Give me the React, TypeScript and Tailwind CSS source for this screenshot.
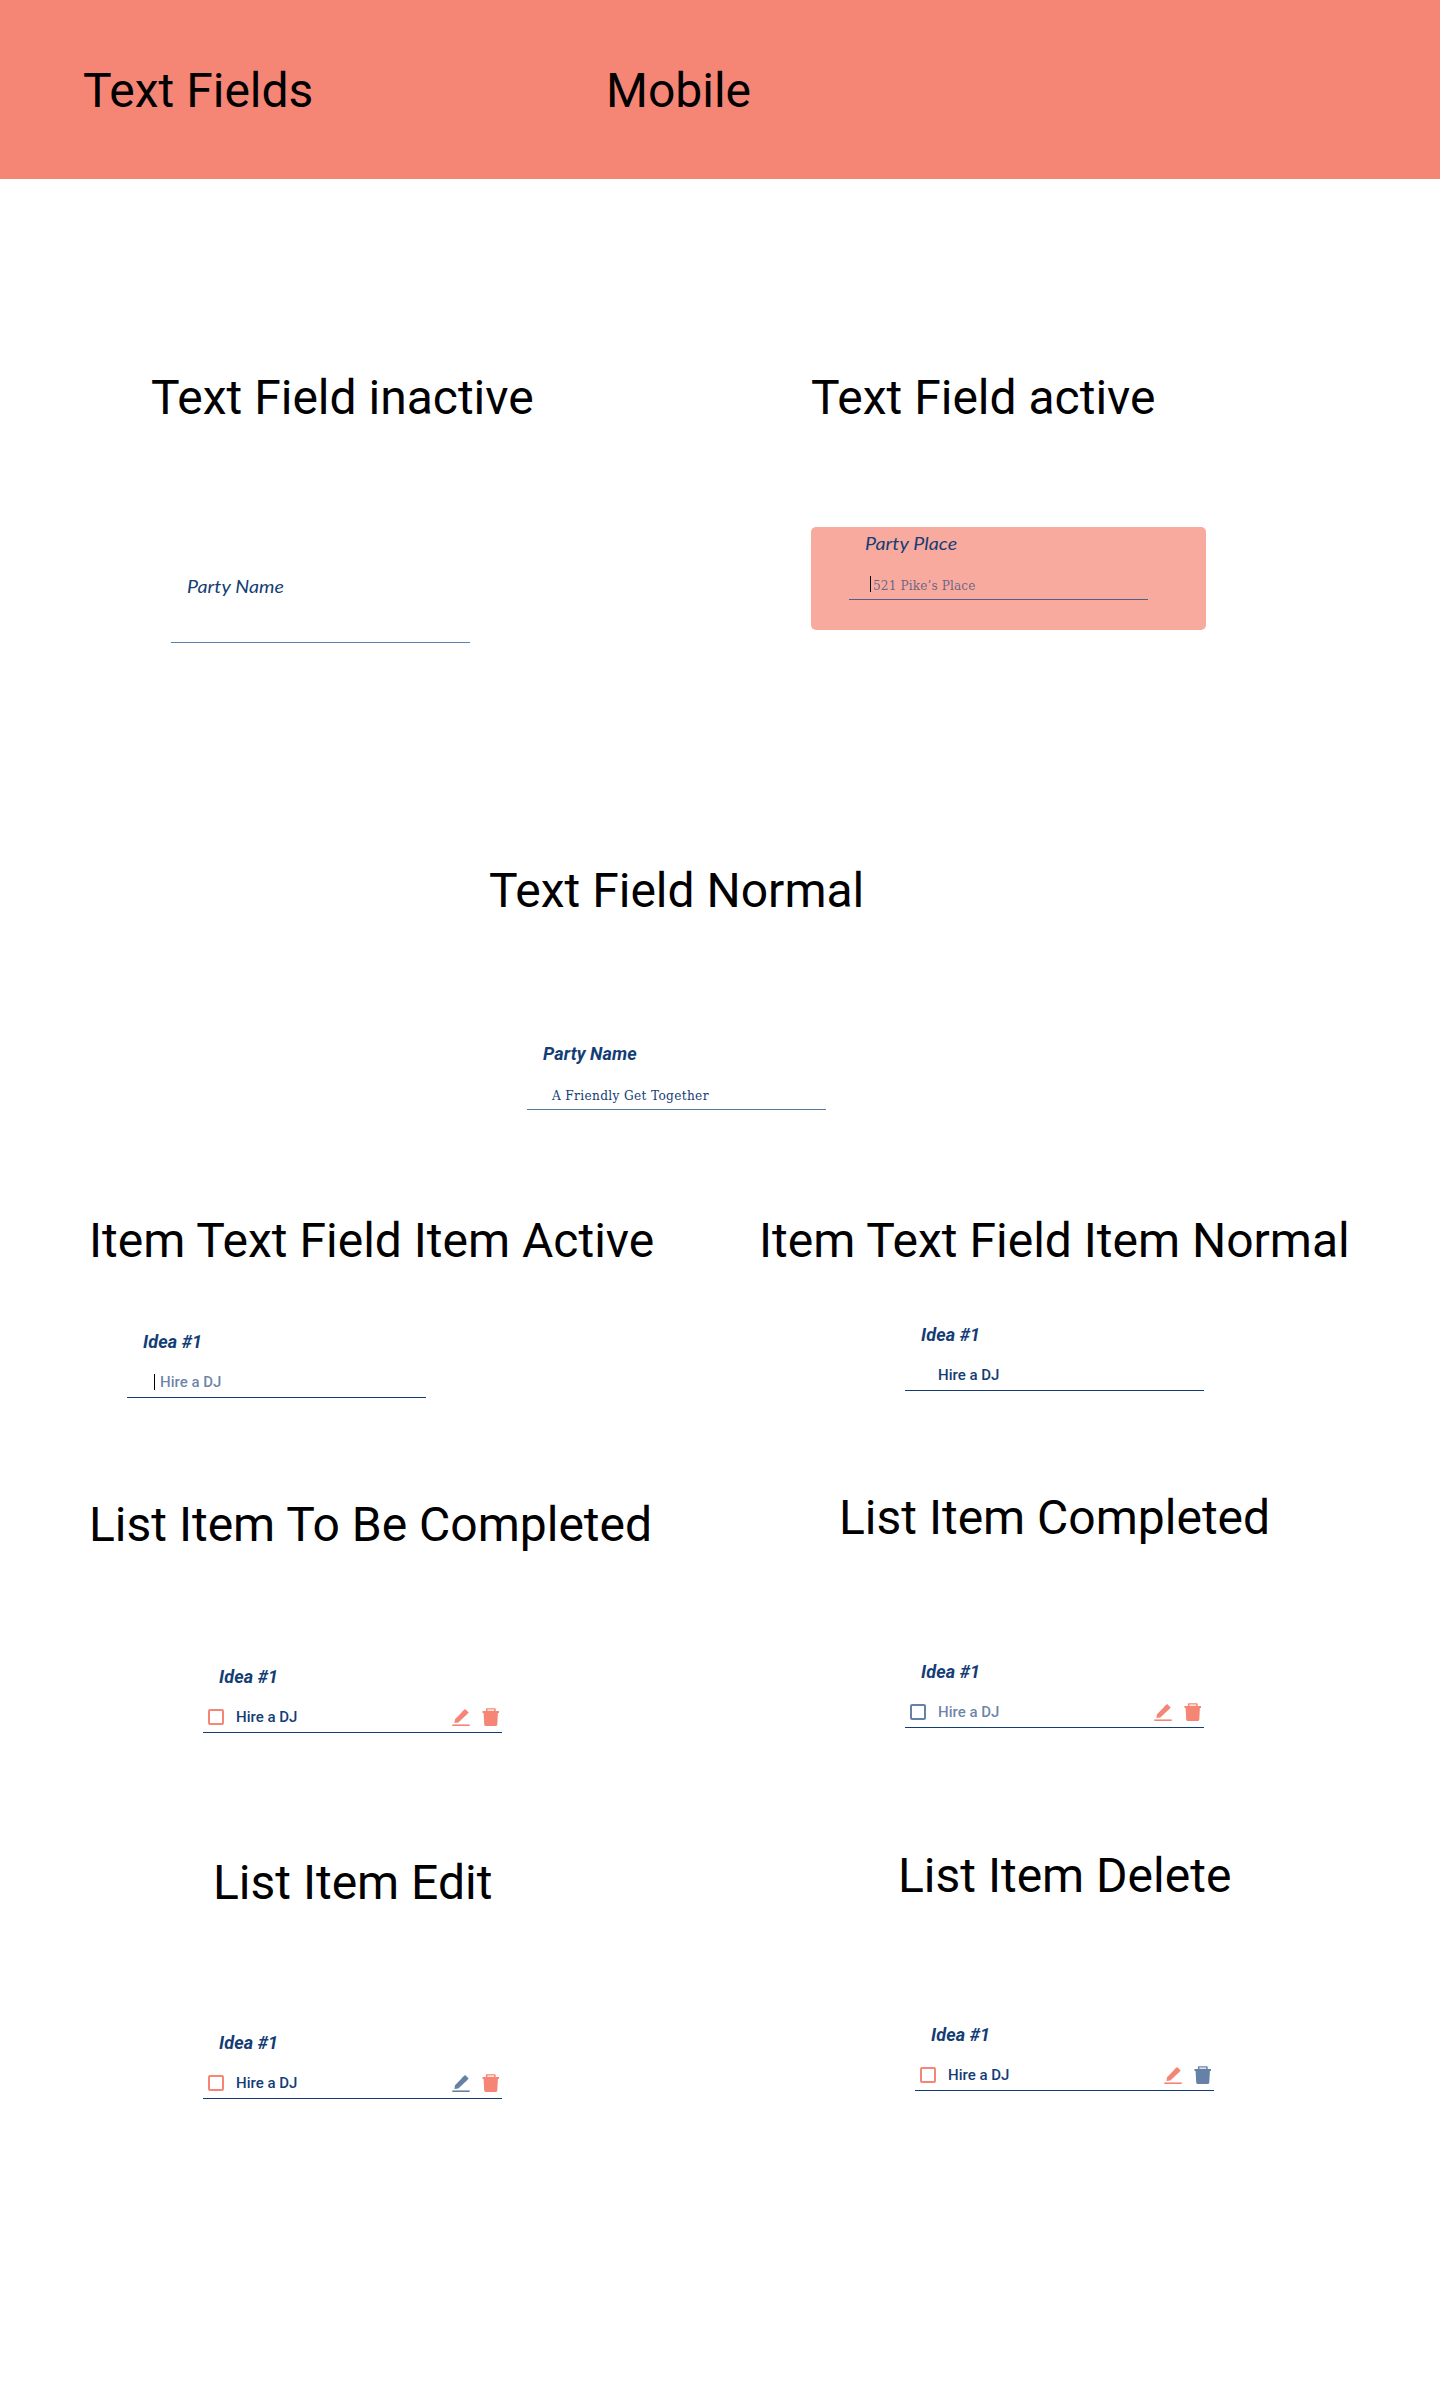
import type { ReactNode } from "react";

const heading = "h-14 whitespace-nowrap text-[48px] leading-[56px] text-black";

const labelStyles = {
  light: "-mt-px mb-px origin-left scale-x-[1.09] font-['Lato'] text-[18px] font-normal tracking-[0.1px]",
  bold: "font-['Roboto'] text-[18px] font-bold tracking-[0.1px]",
};

function Field({
  label,
  variant = "bold",
  line = "border-[#143d76]",
  className = "",
  children,
}: {
  label: string;
  variant?: "light" | "bold";
  line?: string;
  className?: string;
  children?: ReactNode;
}) {
  return (
    <div className={`flex h-[68px] w-[299px] flex-col border-b ${line} ${className}`}>
      <div className={`ml-4 h-6 w-fit leading-6 text-[#143d76] italic ${labelStyles[variant]}`}>
        {label}
      </div>
      <div className="mt-4 flex h-6 items-center text-[15px] leading-6 whitespace-nowrap">
        {children}
      </div>
    </div>
  );
}

function Caret() {
  return <span className="h-4 w-px shrink-0 bg-black" />;
}

function Pencil({ className }: { className: string }) {
  return (
    <svg viewBox="0 0 18 18" className={`size-[18px] shrink-0 ${className}`} fill="currentColor">
      <path d="M2.4 15 3 11.2 9.6 4.5 10 3.8 13.1.9 16.7 4.5 13.9 7.5 13.2 8 6.4 14.6Z" />
      <path d="M.3 16.4h17.4V18H.3z" />
    </svg>
  );
}

function Trash({ className }: { className: string }) {
  return (
    <svg viewBox="0 0 18 18" className={`size-[18px] shrink-0 ${className}`} fill="currentColor">
      <path
        fillRule="evenodd"
        d="M4.8.2h8q.9 0 .9.9v1.9H17v1.9h-1.1l-.6 11.7q-.1 1.3-1.3 1.3H3.5q-1.2 0-1.3-1.3L1.6 4.9H.5V3h3.4V1.1q0-.9.9-.9ZM5.4 1.6v1.2h6.8V1.6Z"
      />
    </svg>
  );
}

const coral = "text-[#f58675]";
const slate = "text-[#143d76]/65";
const value = "font-medium";

function ListItem({
  box = "border-[#f58675]",
  text = "text-[#143d76]",
  pencil = coral,
  trash = coral,
  className,
}: {
  box?: string;
  text?: string;
  pencil?: string;
  trash?: string;
  className: string;
}) {
  return (
    <Field label="Idea #1" className={className}>
      <span className={`ml-[5px] size-4 shrink-0 rounded-[2px] border-2 ${box}`} />
      <span className={`ml-3 ${value} ${text}`}>Hire a DJ</span>
      <span className="mr-[2px] ml-auto flex gap-3">
        <Pencil className={pencil} />
        <Trash className={trash} />
      </span>
    </Field>
  );
}

const slab = "mt-[2px] font-['DejaVu_Serif_Condensed','DejaVu_Serif',serif] text-[13.5px]";

export default function App() {
  return (
    <div className="h-[2397px] w-[1440px] overflow-hidden bg-white font-['Roboto',sans-serif]">
      <header className="flex h-[179px] bg-[#f58675] pt-[63px]">
        <h1 className={`ml-[83px] w-[523px] ${heading}`}>Text Fields</h1>
        <h1 className={heading}>Mobile</h1>
      </header>

      <section className="flex h-[464px] pt-[191px]">
        <div className="w-[811px] shrink-0 pl-[151px]">
          <h2 className={heading}>Text Field inactive</h2>
          <Field
            label="Party Name"
            variant="light"
            line="border-[#5b81ad]"
            className="mt-[149px] ml-5"
          />
        </div>
        <div>
          <h2 className={heading}>Text Field active</h2>
          <div className="mt-[101px] h-[103px] w-[395px] rounded-[5px] bg-[#f8aa9e] pt-[5px] pl-[38px]">
            <Field label="Party Place" variant="light" line="border-[#143d76]/70">
              <span className="w-[21px]" />
              <Caret />
              <span className={`ml-[2px] tracking-[0.1px] text-[#143d76]/65 ${slab}`}>
                521 Pike’s Place
              </span>
            </Field>
          </div>
        </div>
      </section>

      <section className="pt-[220px] pl-[489px]">
        <h2 className={heading}>Text Field Normal</h2>
        <Field label="Party Name" line="border-[#143d76]/70" className="mt-[123px] ml-[38px]">
          <span className={`ml-[25px] tracking-[0.35px] text-[#143d76] ${slab}`}>
            A Friendly Get Together
          </span>
        </Field>
      </section>

      <section className="flex pt-[103px]">
        <div className="w-[720px] shrink-0">
          <h2 className={`pl-[89px] ${heading}`}>Item Text Field Item Active</h2>
          <Field label="Idea #1" className="mt-[61px] ml-[127px]">
            <span className="w-[27px]" />
            <Caret />
            <span className={`ml-[5px] text-[#143d76]/65 ${value}`}>Hire a DJ</span>
          </Field>

          <h2 className={`mt-[99px] pl-[89px] ${heading}`}>List Item To Be Completed</h2>
          <ListItem className="mt-[112px] ml-[203px]" />

          <h2 className={`mt-[122px] pl-[213px] ${heading}`}>List Item Edit</h2>
          <ListItem pencil={slate} className="mt-[120px] ml-[203px]" />
        </div>

        <div>
          <h2 className={`pl-[39px] ${heading}`}>Item Text Field Item Normal</h2>
          <Field label="Idea #1" className="mt-[54px] ml-[185px]">
            <span className={`ml-[33px] text-[#143d76] ${value}`}>Hire a DJ</span>
          </Field>

          <h2 className={`mt-[99px] pl-[119px] ${heading}`}>List Item Completed</h2>
          <ListItem
            box="border-[#143d76]/65"
            text="text-[#143d76]/65"
            className="mt-[114px] ml-[185px]"
          />

          <h2 className={`mt-[120px] pl-[178px] ${heading}`}>List Item Delete</h2>
          <ListItem trash={slate} className="mt-[119px] ml-[195px]" />
        </div>
      </section>
    </div>
  );
}
